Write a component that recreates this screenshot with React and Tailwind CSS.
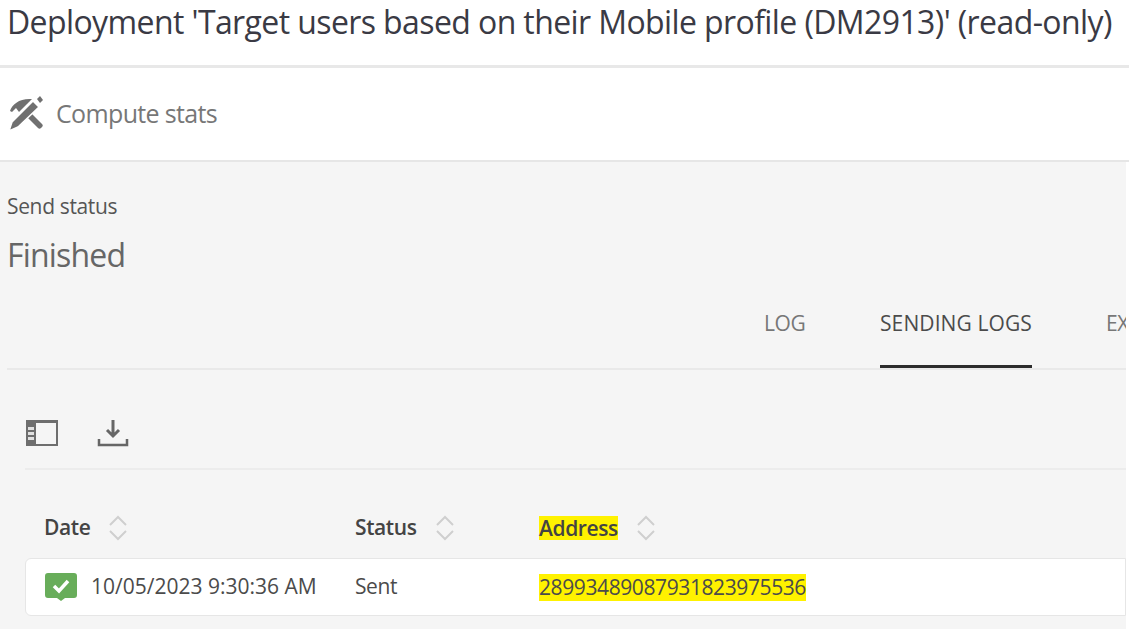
function ComputeIcon() {
  return (
    <svg width="36" height="36" viewBox="0 0 36 36" className="shrink-0">
      <path d="M3 15C5 8 13 2 25 3l-5 5-8 8-3-4-4 4z" fill="#707070" />
      <path d="M20 21l4-4 11 11c1 1 1 2 0 3l-1 1c-1 1-2 1-3 0z" fill="#707070" />
      <path d="M2 35l3-9L26 5l6 6-21 20z" fill="#707070" stroke="#fff" strokeWidth="1.5" />
      <path d="M30 3l3-3 3 4-3 3z" fill="#707070" />
    </svg>
  );
}

function ColumnsIcon() {
  return (
    <svg width="34" height="28" viewBox="0 0 34 28">
      <rect x="1" y="1" width="32" height="26" fill="#6e6e6e" />
      <rect x="11" y="4" width="20" height="21" fill="#f5f5f5" />
      <rect x="3" y="8" width="6" height="3" fill="#e0e0e0" />
      <rect x="3" y="13" width="6" height="3" fill="#e0e0e0" />
      <rect x="3" y="18" width="6" height="3" fill="#e0e0e0" />
    </svg>
  );
}

function DownloadIcon() {
  return (
    <svg width="32" height="30" viewBox="0 0 32 30">
      <path d="M16 2v15M10 12l6 6 6-6" fill="none" stroke="#666" strokeWidth="3" />
      <path d="M2 21v6h28v-6" fill="none" stroke="#666" strokeWidth="2.5" />
    </svg>
  );
}

function SortIcon() {
  return (
    <svg width="22" height="26" viewBox="0 0 22 26" className="shrink-0">
      <path d="M3 10l8-8 8 8M3 16l8 8 8-8" fill="none" stroke="#cfcfcf" strokeWidth="2" />
    </svg>
  );
}

function StatusIcon() {
  return (
    <svg width="34" height="30" viewBox="0 0 34 30" className="shrink-0">
      <path d="M4 1h26c2 0 3 1 3 3v19c0 2-1 3-3 3h-9l-4 3-4-3H4c-2 0-3-1-3-3V4c0-2 1-3 3-3z" fill="#68ad5a" />
      <path d="M10 14l5 5 9-10" fill="none" stroke="#fff" strokeWidth="3.5" />
    </svg>
  );
}

function Column({ label, width, highlight }) {
  return (
    <div className={`flex items-center gap-[17px] ${width}`}>
      {highlight ? (
        <span className="bg-[#fff200] h-[24px] leading-[24px]">{label}</span>
      ) : (
        <span>{label}</span>
      )}
      <SortIcon />
    </div>
  );
}

export default function App() {
  return (
    <div className="w-[1129px] h-[629px] overflow-hidden bg-white text-[#4b4b4b] font-['Open_Sans','Noto_Sans',sans-serif]">
      <header className="h-[68px] border-b-[3px] border-[#e8e8e8] pl-[7px]">
        <h1 className="text-[32px] leading-[44px] text-[#3a3a44] whitespace-nowrap tracking-[-0.6px]">
          Deployment 'Target users based on their Mobile profile (DM2913)' (read-only)
        </h1>
      </header>

      <div className="h-[94px] border-b-2 border-[#e6e6e6] flex items-center gap-[13px] pl-[7px]">
        <ComputeIcon />
        <span className="text-[25px] text-[#777] tracking-[-0.65px]">Compute stats</span>
      </div>

      <main className="h-[467px] bg-[#f5f5f5] pl-[7px] mr-[3px]">
        <div className="pt-[30px] text-[21px] leading-[28px] text-[#555] tracking-[-0.35px]">Send status</div>
        <div className="mt-[13px] text-[32px] leading-[44px] text-[#666] tracking-[-0.8px]">Finished</div>

        <nav className="mt-[10px] h-[83px] border-b-2 border-[#e9e9e9] flex justify-end text-[21px] tracking-[-0.4px] overflow-hidden">
          <div className="w-[116px] pt-[21px] text-[#777]">LOG</div>
          <div className="w-[226px] pt-[21px] text-[#4b4b4b] tracking-[0.1px] relative">
            SENDING LOGS
            <span className="absolute left-0 bottom-0 w-[152px] h-[3px] bg-[#2c2c2c]"></span>
          </div>
          <div className="w-[20px] pt-[21px] text-[#777]">EX</div>
        </nav>

        <div className="ml-[18px] h-[100px] border-b-2 border-[#ececec] flex items-center gap-[38px] pt-[28px]">
          <ColumnsIcon />
          <DownloadIcon />
        </div>

        <div className="ml-[37px] h-[88px] flex items-center pt-[28px] text-[21px] font-semibold text-[#444] tracking-[-0.4px]">
          <Column label="Date" width="w-[311px]" />
          <Column label="Status" width="w-[184px]" />
          <Column label="Address" width="w-[300px]" highlight />
        </div>

        <div className="ml-[18px] h-[58px] bg-white border border-[#e6e6e6] rounded-l-md flex items-center pl-[18px] text-[21px] tracking-[-0.4px] text-[#4b4b4b]">
          <div className="w-[311px] flex items-center gap-[13px]">
            <StatusIcon />
            <span className="tracking-[0px]">10/05/2023 9:30:36 AM</span>
          </div>
          <div className="w-[184px]">Sent</div>
          <span className="bg-[#fff200] h-[27px] leading-[27px]">28993489087931823975536</span>
        </div>
      </main>
    </div>
  );
}
